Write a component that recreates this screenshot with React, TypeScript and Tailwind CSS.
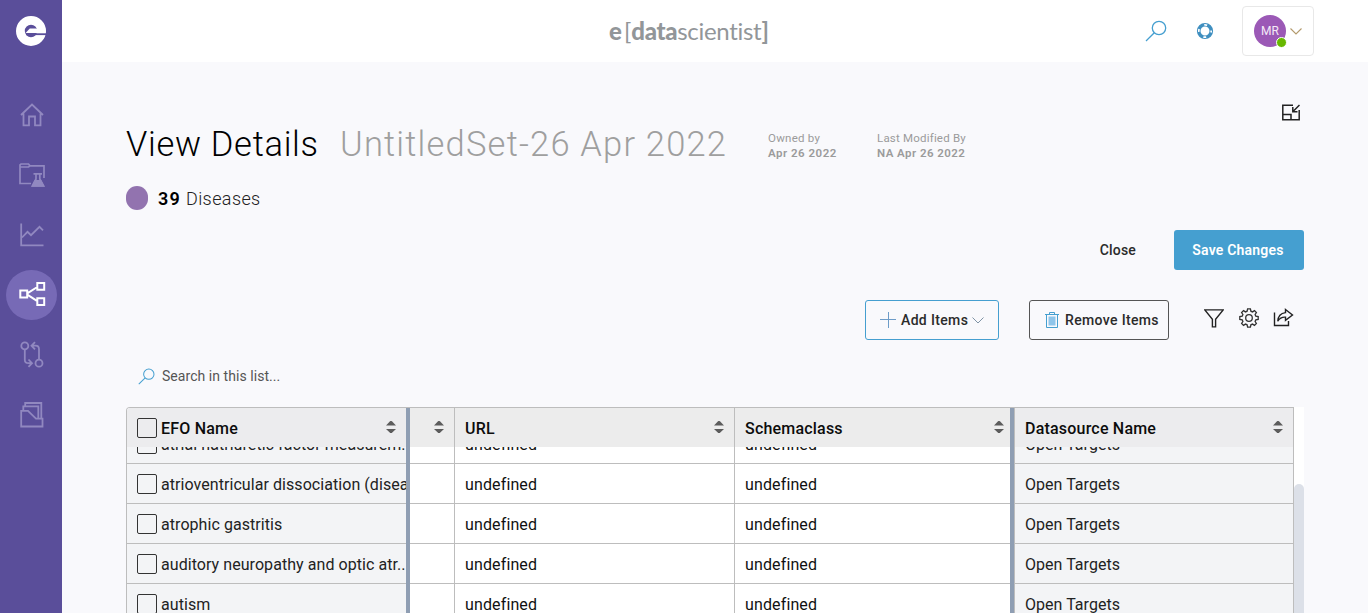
import React from "react";

const diseases = [
  "atrial natriuretic factor measurem...",
  "atrioventricular dissociation (disease)",
  "atrophic gastritis",
  "auditory neuropathy and optic atr...",
  "autism",
];

function HomeIcon() {
  return (
    <svg width="26" height="26" viewBox="0 0 26 26" fill="none" stroke="#9188c0" strokeWidth="1.8">
      <path d="M2 13 13 2.5 24 13M4.5 11.5V23.3H10V14.5H16V23.3H21.5V11.5" />
    </svg>
  );
}

function FolderFlaskIcon() {
  return (
    <svg width="28" height="26" viewBox="0 0 28 26" fill="none" stroke="#9188c0" strokeWidth="1.7">
      <path d="M13 21.5H2V2.8L3 2H10.5L12 3.8H26V16M2.5 5H10.5L12 3.8" />
      <path d="M15.5 11.8H24M18 12V17L14.5 23.8H25.5L21.8 17V12" />
      <path d="M17 18.8H22.8L25.5 23.8H14.5Z" fill="#9188c0" />
    </svg>
  );
}

function ChartIcon() {
  return (
    <svg width="26" height="26" viewBox="0 0 26 26" fill="none" stroke="#9188c0" strokeWidth="1.8">
      <path d="M2.2 1.5V23.3H24.5M3 15.5 8.5 9.8 12 13.2 20.5 4.8 24 8.3" />
    </svg>
  );
}

function NetworkIcon() {
  return (
    <svg width="28" height="26" viewBox="0 0 28 26" fill="none" stroke="#fff" strokeWidth="2">
      <path d="M2.3 8.6H9.2V15.5H2.3ZM19.3.9H26.2V7.8H19.3ZM19.3 16.2H26.2V23.1H19.3ZM9.3 11.3 19.3 5M9.3 12.7 19.3 19.2" />
    </svg>
  );
}

function CompareIcon() {
  return (
    <svg width="26" height="28" viewBox="0 0 26 28" fill="none" stroke="#9188c0" strokeWidth="1.8">
      <circle cx="5.8" cy="4.9" r="3.5" />
      <circle cx="20" cy="22.2" r="3.5" />
      <path d="M5.8 8.4V18.7Q5.8 22.2 9.5 22.2H13M9.5 18.5 13 22.2 9.5 25.8M20 18.7V8.2Q20 4.7 16.5 4.7H12.5M16 1.1 12.5 4.7 16 8.3" />
    </svg>
  );
}

function FilesIcon() {
  return (
    <svg width="26" height="28" viewBox="0 0 26 28" fill="none" stroke="#9188c0" strokeWidth="1.8">
      <path d="M2.2 9.8H9L17 17.7H23.5V25.5H2.2ZM4.3 9.5V5.4H19.3V17.5M6.2 5V2H22.3V17.5" />
    </svg>
  );
}

function SearchIcon({ size, color }: { size: number; color: string }) {
  return (
    <svg width={size} height={size} viewBox="0 0 22 22" fill="none" stroke={color} strokeWidth="1.3">
      <circle cx="14" cy="8" r="6.7" />
      <path d="M9.3 12.8 1 21" />
    </svg>
  );
}

function SortIcon() {
  return (
    <svg width="10" height="12" viewBox="0 0 10 12" fill="#5c5c5c" className="shrink-0">
      <path d="M0 4.5 4 .3Q5-.4 6 .3L10 4.5ZM0 8H10L6 11.7Q5 12.6 4 11.7Z" />
    </svg>
  );
}

function HeaderCell({ title, className }: { title?: string; className: string }) {
  return (
    <div className={`flex h-[39px] items-start pt-[11px] text-[16px] font-medium leading-[20px] tracking-[0.2px] text-[#0c0c0c] ${className}`}>
      <span className="flex-1 whitespace-nowrap">{title}</span>
      <span className="pt-[2px]"><SortIcon /></span>
    </div>
  );
}

function Checkbox() {
  return <span className="block h-5 w-5 shrink-0 rounded-[2px] border border-[#333]" />;
}

function Sidebar() {
  return (
    <nav className="flex h-full w-[62px] shrink-0 flex-col items-center bg-[#5a4e9a] pt-4">
      <svg width="30" height="30" viewBox="0 0 30 30">
        <circle cx="15" cy="15" r="10.6" fill="none" stroke="#fff" strokeWidth="8.8" />
        <path d="M9.6 16.9 13.8 12.4H29.5V16.9Z" fill="#fff" />
        <path d="M10 17.3H30V19.1H10Z" fill="#5a4e9a" />
      </svg>
      <div className="mt-11 flex flex-col items-center gap-[10px] pl-px">
        <span className="flex h-[50px] w-[51px] items-center justify-center"><HomeIcon /></span>
        <span className="flex h-[50px] w-[51px] items-center justify-center"><FolderFlaskIcon /></span>
        <span className="flex h-[50px] w-[51px] items-center justify-center"><ChartIcon /></span>
        <span className="flex h-[50px] w-[51px] items-center justify-center rounded-full bg-[#776ab6]"><NetworkIcon /></span>
        <span className="flex h-[50px] w-[51px] items-center justify-center"><CompareIcon /></span>
        <span className="flex h-[50px] w-[51px] items-center justify-center"><FilesIcon /></span>
      </div>
    </nav>
  );
}

function TopBar() {
  return (
    <header className="flex h-[62px] shrink-0 items-center bg-white pr-[54px]">
      <div className="flex flex-1 items-center pl-[547px] font-['Lato',sans-serif] text-[24px] leading-[30px] text-[#929699]">
        <span className="font-black">e</span>
        <span className="ml-[2px]">[</span>
        <span className="font-black tracking-[-0.3px]">data</span>
        <span className="tracking-[-0.3px]">scientist</span>
        <span className="font-bold">]</span>
      </div>
      <SearchIcon size={22} color="#459fd0" />
      <svg className="ml-[29px]" width="18" height="18" viewBox="0 0 18 18" fill="none">
        <circle cx="9" cy="9" r="6.3" stroke="#3f8fc0" strokeWidth="3.6" />
        <circle cx="9" cy="9" r="6.2" stroke="#fff" strokeWidth="1.7" strokeDasharray="3 6.739" strokeDashoffset="1.5" />
      </svg>
      <div className="ml-7 flex h-[50px] w-[72px] items-center rounded-[4px] border border-[#e8e8e8] pl-[11px]">
        <div className="relative flex h-8 w-8 items-center justify-center rounded-full bg-[#9b59b6] font-['Roboto',sans-serif] text-[12px] text-[#f4e9f7]">
          MR
          <span className="absolute -right-[1px] -bottom-[1px] h-[11px] w-[11px] rounded-full border-[1.5px] border-white bg-[#67b800]" />
        </div>
        <svg className="ml-1" width="12" height="7" viewBox="0 0 12 7" fill="none" stroke="#b39a6c" strokeWidth="1.1">
          <path d="M.5.5 6 6 11.5.5" />
        </svg>
      </div>
    </header>
  );
}

function Toolbar() {
  return (
    <div className="mt-[30px] flex h-10 items-center text-[14px] font-medium tracking-[0.35px] text-[#2b2b2b]">
      <button className="ml-[739px] flex h-10 w-[134px] items-center rounded-[3px] border border-[#459fd0] pl-[14px]">
        <svg width="16" height="16" viewBox="0 0 16 16" stroke="#6d9cc8" fill="none"><path d="M8.5 0V16M0 7.5H16" /></svg>
        <span className="ml-[5px] whitespace-nowrap">Add Items</span>
        <svg className="ml-1" width="12" height="7" viewBox="0 0 12 7" fill="none" stroke="#7f93a5" strokeWidth="1"><path d="M.5.5 6 6 11.5.5" /></svg>
      </button>
      <button className="ml-[30px] flex h-10 w-[140px] items-center rounded-[3px] border border-[#555] pl-[15px]">
        <svg width="14" height="18" viewBox="0 0 14 18" fill="none" stroke="#459fd0">
          <path d="M0 3.5H14M4.5 3V1.5H9.5V3M1.5 3.5V16.5H12.5V3.5" />
          <path d="M3.5 5.5H10.5V14.5H3.5Z" fill="#8fc5ea" stroke="none" />
        </svg>
        <span className="ml-[6px] whitespace-nowrap">Remove Items</span>
      </button>
      <svg className="ml-[35px] -mt-[4px]" width="20" height="19" viewBox="0 0 20 19" fill="none" stroke="#222" strokeWidth="1.4">
        <path d="M.8.9H19.2L11.6 10.3V17.9H8.4V10.3Z" />
      </svg>
      <svg className="ml-[15px] -mt-[5px]" width="20" height="20" viewBox="0 0 20 20" fill="none" stroke="#333" strokeWidth="1.3">
        <circle cx="10" cy="10" r="3.3" />
        <path d="M8.6.8H11.4L11.9 3.2 13.5 3.9 15.5 2.6 17.4 4.5 16.1 6.5 16.8 8.1 19.2 8.6V11.4L16.8 11.9 16.1 13.5 17.4 15.5 15.5 17.4 13.5 16.1 11.9 16.8 11.4 19.2H8.6L8.1 16.8 6.5 16.1 4.5 17.4 2.6 15.5 3.9 13.5 3.2 11.9.8 11.4V8.6L3.2 8.1 3.9 6.5 2.6 4.5 4.5 2.6 6.5 3.9 8.1 3.2Z" />
      </svg>
      <svg className="ml-[14px] -mt-[5px]" width="21" height="19" viewBox="0 0 21 19" fill="none" stroke="#222" strokeWidth="1.4">
        <path d="M1.5 4.5V17.5H15.5V13M12.5 1.5 19.5 7 12.5 12.3V9.2Q7.5 8.8 4.8 13.2 5.2 5.5 12.5 4.6Z" />
      </svg>
    </div>
  );
}

function Table() {
  return (
    <div className="mt-[21px] flex h-[230px] w-[1178px] text-[16px] leading-[20px]">
      <div className="flex h-full w-[1168px] overflow-hidden rounded-tl-[4px] border-t border-l border-r border-[#bdbdbd]">
        <section className="w-[283px] shrink-0 overflow-hidden border-r-4 border-[#8f9eb3] bg-[#f3f4f6]">
          <div className="flex h-[39px] items-center bg-[#ececee] pl-[10px]">
            <Checkbox />
            <HeaderCell title="EFO Name" className="flex-1 pl-1 pr-[10px]" />
          </div>
          <div className="h-[200px] overflow-hidden">
            <div className="-mt-[23px]">
              {diseases.map((name) => (
                <div key={name} className="flex h-10 items-center border-b border-[#bdbdbd] pl-[10px] pt-px">
                  <Checkbox />
                  <span className="ml-1 whitespace-nowrap pt-[2px] tracking-[0.06px] text-[#222]">{name}</span>
                </div>
              ))}
            </div>
          </div>
        </section>
        <Column width="w-[45px]" />
        <Column width="w-[280px]" title="URL" value="undefined" />
        <Column width="w-[275px]" title="Schemaclass" value="undefined" last />
        <div className="h-full w-1 shrink-0 bg-[#8f9eb3]" />
        <Column width="w-[279px]" title="Datasource Name" value="Open Targets" frozen />
      </div>
      <div className="flex h-full w-[10px] flex-col bg-white pt-[77px]">
        <div className="w-full flex-1 rounded-t-full bg-[#dce0e8]" />
      </div>
    </div>
  );
}

function Column({ width, title, value, last, frozen }: { width: string; title?: string; value?: string; last?: boolean; frozen?: boolean }) {
  const edge = frozen ? "border-l bg-[#f3f4f6]" : last ? "bg-white" : "border-r bg-white";
  const pad = last ? "pr-[6px]" : "pr-[10px]";
  const text = frozen ? "tracking-[0.04px] text-[#222]" : "tracking-[0.13px] text-[#111]";
  return (
    <section className={`${width} ${edge} shrink-0 overflow-hidden border-[#bdbdbd]`}>
      <HeaderCell title={title} className={`pl-[10px] ${pad} ${frozen ? "bg-[#ececee]" : "bg-[#ececec]"}`} />
      <div className="h-[200px] overflow-hidden">
        <div className="-mt-[23px]">
          {diseases.map((name) => (
            <div key={name} className={`flex h-10 items-center border-b border-[#bdbdbd] pl-[10px] pt-[2px] ${text}`}>
              {value}
            </div>
          ))}
        </div>
      </div>
    </section>
  );
}

export default function App() {
  return (
    <div className="flex h-[613px] w-[1368px] overflow-hidden bg-[#f9f9fc] font-['Roboto',sans-serif]">
      <Sidebar />
      <div className="flex min-w-0 flex-1 flex-col">
        <TopBar />
        <main className="flex-1 pl-16 pr-16">
          <div className="flex h-[60px] items-end justify-end pr-1">
            <svg width="18" height="19" viewBox="0 0 18 19" fill="none" stroke="#222" strokeWidth="1.5">
              <path d="M11 2.2H.8V16.8H17.2V7M.8 11.5H9V16.8M17.5 2 11 8.5M10.8 4V8.7H15.5" />
            </svg>
          </div>
          <div className="flex h-[44px] items-center whitespace-nowrap">
            <h1 className="w-[213px] text-[34.5px] font-[350] leading-[44px] tracking-[0.7px] text-black">View Details</h1>
            <h2 className="w-[429px] pl-px text-[34.5px] font-[350] leading-[44px] tracking-[1.2px] text-[#9f9f9f]">UntitledSet-26 Apr 2022</h2>
            <div className="w-[109px] pt-1 text-[11.5px] leading-[15px] tracking-[0.25px] text-[#9b9b9b]">
              <p>Owned by</p>
              <p className="font-semibold tracking-[0.5px]">Apr 26 2022</p>
            </div>
            <div className="pt-1 text-[11.5px] leading-[15px] tracking-[0.2px] text-[#9b9b9b]">
              <p>Last Modified By</p>
              <p className="font-semibold tracking-[0.45px]">NA Apr 26 2022</p>
            </div>
          </div>
          <div className="mt-5 flex h-6 items-center text-[18px]">
            <span className="h-6 w-[22px] rounded-full bg-[#9273af]" />
            <span className="ml-[10px] font-semibold tracking-[1.2px] text-black">39</span>
            <span className="ml-[5px] font-light tracking-[0.4px] text-[#222]">Diseases</span>
          </div>
          <div className="mt-5 flex h-10 items-center justify-end text-[14px] tracking-[0.2px]">
            <button className="mr-[38px] font-medium text-[#2b2b2b]">Close</button>
            <button className="h-10 w-[130px] rounded-[3px] bg-[#459fd0] pr-[2px] font-semibold text-white">Save Changes</button>
          </div>
          <Toolbar />
          <div className="mt-[26px] flex h-5 items-center pl-3 text-[14px] tracking-[0.05px] text-[#555]">
            <SearchIcon size={17} color="#459fd0" />
            <span className="ml-[7px]">Search in this list...</span>
          </div>
          <Table />
        </main>
      </div>
    </div>
  );
}
